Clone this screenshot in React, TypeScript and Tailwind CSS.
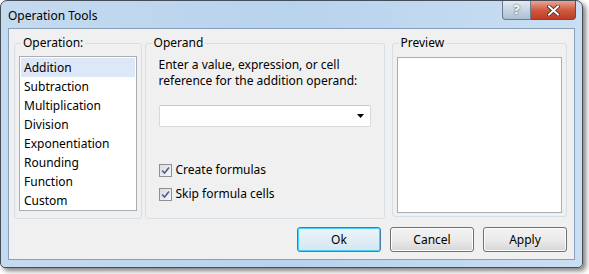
import React from "react";

const font = { fontFamily: '"Noto Sans", "DejaVu Sans", sans-serif' };

function Check() {
  return (
    <div className="w-[13px] h-[13px] border border-[#8f8f8f] bg-gradient-to-br from-[#dcdcdc] to-[#f5f5f5] flex items-center justify-center">
      <svg width="9" height="9" viewBox="0 0 9 9">
        <path d="M1 4.5 L3.5 7 L8 1.5" stroke="#4a5f97" strokeWidth="1.6" fill="none" />
      </svg>
    </div>
  );
}

function Btn({ label, focus }: { label: string; focus?: boolean }) {
  return (
    <div
      className={`w-[84px] h-[25px] rounded-[3px] flex items-center justify-center text-[12px] text-black ${
        focus
          ? "border border-[#3c7fb1] shadow-[inset_0_0_0_1px_#48d2f8] bg-gradient-to-b from-[#ecf4fa] to-[#d4e6f2]"
          : "border border-[#707070] shadow-[inset_0_0_0_1px_#fcfcfc] bg-gradient-to-b from-[#f2f2f2] via-[#ebebeb] to-[#d6d6d6]"
      }`}
    >
      {label}
    </div>
  );
}

function Group({ label, className, children }: { label: string; className: string; children?: React.ReactNode }) {
  return (
    <div className={`relative border border-[#d5dfe5] rounded-[3px] ${className}`}>
      <span className="absolute -top-[9px] left-[6px] px-[2px] bg-[#f0f0f0] text-[12px] leading-[16px] text-black">{label}</span>
      {children}
    </div>
  );
}

export default function App() {
  const ops = ["Addition", "Subtraction", "Multiplication", "Division", "Exponentiation", "Rounding", "Function", "Custom"];
  return (
    <div className="w-[589px] h-[274px] bg-white" style={font}>
      <div className="w-[583px] h-[268px] rounded-t-[7px] rounded-b-[5px] border border-[#454d58] bg-gradient-to-r from-[#c4daef] via-[#b8d3ee] to-[#c9def2] shadow-[3px_3px_5px_rgba(0,0,0,0.5)] flex flex-col px-[7px]">
        <div className="h-[27px] flex items-start justify-between shrink-0">
          <div className="pt-[6px] text-[12px] text-black">Operation Tools</div>
          <div className="flex h-[19px] -mr-[1px]">
            <div className="w-[29px] h-[19px] rounded-bl-[4px] border border-t-0 border-[#6d7a8a] bg-gradient-to-b from-[#e3ebf3] via-[#c6d4e3] to-[#aebfd4] flex items-center justify-center text-white font-bold text-[13px] [text-shadow:0_0_2px_#333]">?</div>
            <div className="w-[45px] h-[19px] rounded-br-[4px] border border-t-0 border-l-0 border-[#6d4a45] bg-gradient-to-b from-[#e8a493] via-[#cf5a41] to-[#c03a24] flex items-center justify-center">
              <svg width="13" height="11" viewBox="0 0 13 11">
                <path d="M2 1.5 L11 9.5 M11 1.5 L2 9.5" stroke="#3a2a28" strokeWidth="3.6" strokeLinecap="square" />
                <path d="M2 1.5 L11 9.5 M11 1.5 L2 9.5" stroke="#fff" strokeWidth="2" strokeLinecap="square" />
              </svg>
            </div>
          </div>
        </div>
        <div className="flex-1 border border-[#8aa0b9] bg-[#f0f0f0] mb-[7px] flex flex-col pl-[5px] pr-[7px] pt-[14px]">
          <div className="flex gap-[3px]">
            <Group label="Operation:" className="w-[130px] h-[176px] p-[4px] pt-[12px]">
              <div className="h-[155px] border border-[#aaadb2] bg-white pt-px px-px">
                {ops.map((o, i) => (
                  <div
                    key={o}
                    className={`h-[19px] pl-[3px] text-[12px] leading-[19px] text-black ${i === 0 ? "bg-[#dce7f8]" : ""}`}
                  >
                    {o}
                  </div>
                ))}
              </div>
            </Group>
            <Group label="Operand" className="w-[240px] h-[176px] pl-[13px] pr-[13px] pt-[13px]">
              <div className="text-[12px] leading-[16px] text-black">
                Enter a value, expression, or cell
                <br />
                reference for the addition operand:
              </div>
              <div className="mt-[16px] h-[22px] w-[212px] border border-[#d9d9d9] border-t-[#c8c8c8] bg-white rounded-[2px] flex items-center justify-end pr-[6px]">
                <svg width="7" height="4" viewBox="0 0 7 4">
                  <path d="M0 0 H7 L3.5 4 Z" fill="#000" />
                </svg>
              </div>
              <div className="mt-[36px] flex flex-col gap-[10px]">
                <div className="flex items-center gap-[4px] text-[12px] leading-[14px] text-black">
                  <Check />
                  <span>Create formulas</span>
                </div>
                <div className="flex items-center gap-[4px] text-[12px] leading-[14px] text-black">
                  <Check />
                  <span>Skip formula cells</span>
                </div>
              </div>
            </Group>
            <Group label="Preview" className="ml-[4px] w-[179px] h-[174px] p-[4px] pt-[13px]">
              <div className="h-[156px] border border-[#aaadb2] bg-white" />
            </Group>
          </div>
          <div className="flex justify-end gap-[9px] mt-[8px]">
            <Btn label="Ok" focus />
            <Btn label="Cancel" />
            <Btn label="Apply" />
          </div>
        </div>
      </div>
    </div>
  );
}
